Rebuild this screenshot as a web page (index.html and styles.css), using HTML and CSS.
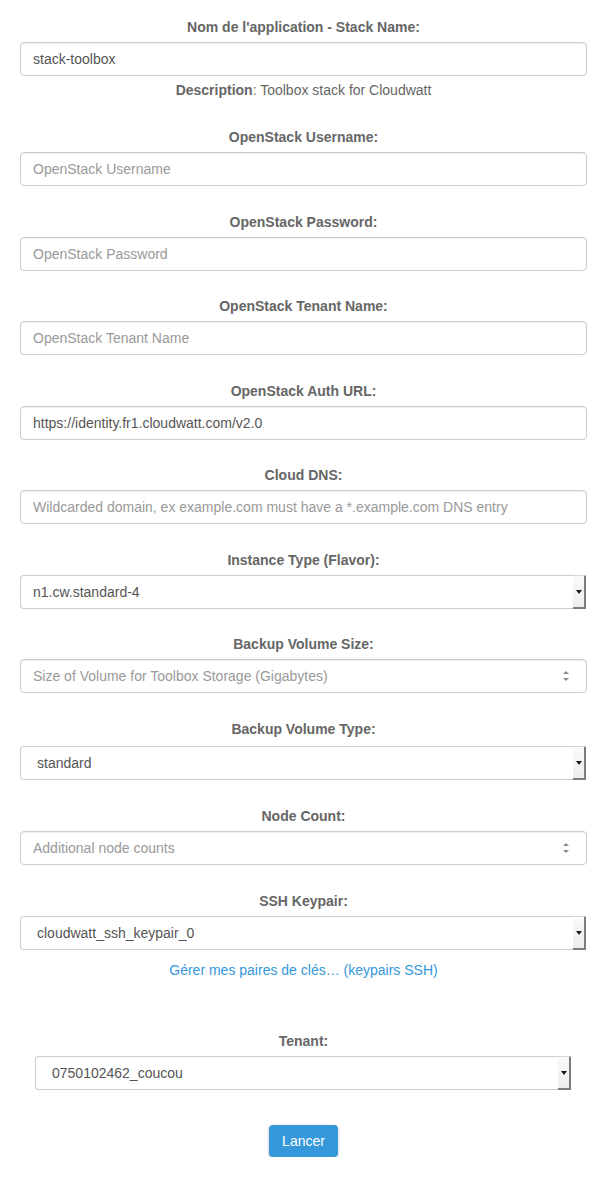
FILE: index.html
```html
<!DOCTYPE html>
<html lang="fr">
<head>
<meta charset="utf-8">
<title>Stack</title>
<link rel="stylesheet" href="styles.css">
</head>
<body>
<form class="form">
  <div class="group group-first">
    <label class="label">Nom de l'application - Stack Name:</label>
    <input class="control" type="text" value="stack-toolbox">
    <p class="help"><strong>Description</strong>: Toolbox stack for Cloudwatt</p>
  </div>

  <div class="group">
    <label class="label">OpenStack Username:</label>
    <input class="control" type="text" placeholder="OpenStack Username">
  </div>

  <div class="group">
    <label class="label">OpenStack Password:</label>
    <input class="control" type="password" placeholder="OpenStack Password">
  </div>

  <div class="group">
    <label class="label">OpenStack Tenant Name:</label>
    <input class="control" type="text" placeholder="OpenStack Tenant Name">
  </div>

  <div class="group">
    <label class="label">OpenStack Auth URL:</label>
    <input class="control" type="text" value="https://identity.fr1.cloudwatt.com/v2.0">
  </div>

  <div class="group">
    <label class="label">Cloud DNS:</label>
    <input class="control" type="text" placeholder="Wildcarded domain, ex example.com must have a *.example.com DNS entry">
  </div>

  <div class="group">
    <label class="label">Instance Type (Flavor):</label>
    <div class="select">
      <span class="select-value select-value-tight">n1.cw.standard-4</span>
      <span class="select-btn"><span class="caret"></span></span>
    </div>
  </div>

  <div class="group">
    <label class="label">Backup Volume Size:</label>
    <div class="field">
      <input class="field-input" type="text" placeholder="Size of Volume for Toolbox Storage (Gigabytes)">
      <span class="spin"><span class="spin-up"></span><span class="spin-down"></span></span>
    </div>
  </div>

  <div class="group group-voltype">
    <label class="label">Backup Volume Type:</label>
    <div class="select">
      <span class="select-value">standard</span>
      <span class="select-btn"><span class="caret"></span></span>
    </div>
  </div>

  <div class="group">
    <label class="label">Node Count:</label>
    <div class="field">
      <input class="field-input" type="text" placeholder="Additional node counts">
      <span class="spin"><span class="spin-up"></span><span class="spin-down"></span></span>
    </div>
  </div>

  <div class="group group-keypair">
    <label class="label">SSH Keypair:</label>
    <div class="select">
      <span class="select-value">cloudwatt_ssh_keypair_0</span>
      <span class="select-btn"><span class="caret"></span></span>
    </div>
    <a class="link" href="#">Gérer mes paires de clés… (keypairs SSH)</a>
  </div>

  <div class="group group-tenant">
    <label class="label">Tenant:</label>
    <div class="select">
      <span class="select-value">0750102462_coucou</span>
      <span class="select-btn"><span class="caret"></span></span>
    </div>
  </div>

  <div class="actions">
    <button class="btn" type="button">Lancer</button>
  </div>
</form>
</body>
</html>
```

FILE: styles.css
```css
* {
  box-sizing: border-box;
}

html, body {
  background: #fff;
}

body {
  margin: 0;
  font-family: "Liberation Sans", Arial, sans-serif;
  font-size: 14px;
  line-height: 20px;
  color: #666;
}

.form {
  padding: 17px 18px 0 20px;
}

.group {
  margin-bottom: 25.5px;
  text-align: center;
}

.group-first {
  margin-bottom: 27px;
}

.label {
  display: block;
  font-weight: bold;
  margin-bottom: 5px;
  color: #666;
}

.group-voltype {
  margin-bottom: 26.5px;
}

.group-voltype .label {
  margin-bottom: 7px;
}

.control {
  display: block;
  width: 100%;
  height: 34px;
  padding: 6px 12px;
  border: 1px solid #ccc;
  border-radius: 4px;
  font-family: inherit;
  font-size: 14px;
  line-height: 20px;
  color: #555;
  background: #fff;
  box-shadow: inset 0 1px 1px rgba(0, 0, 0, 0.075);
  outline: none;
}

.control::placeholder,
.field-input::placeholder {
  color: #999;
  opacity: 1;
}

.help {
  margin: 4px 0 0;
  color: #666;
}

.help strong {
  font-weight: bold;
}

.select {
  display: flex;
  width: calc(100% - 1px);
  height: 34px;
  border: 1px solid #ccc;
  border-right: none;
  border-radius: 4px 0 0 4px;
  background: #fff;
  text-align: left;
  color: #555;
}

.select-value {
  flex: 1;
  padding: 6px 16px;
  line-height: 20px;
  white-space: nowrap;
  overflow: hidden;
}

.select-value-tight {
  padding-left: 12px;
}

.select-btn {
  display: flex;
  align-items: center;
  justify-content: center;
  width: 13px;
  margin: -1px 0 -1px 0;
  background: linear-gradient(to bottom, #fafafa, #ededed);
  border-top: 1px solid #d8d8d8;
  border-right: 2px solid #7c7c7c;
  border-bottom: 2px solid #7c7c7c;
  border-top-right-radius: 2px;
}

.caret {
  width: 0;
  height: 0;
  border-left: 3px solid transparent;
  border-right: 3px solid transparent;
  border-top: 4px solid #1a1a1a;
  margin-top: 1px;
}

.field {
  display: flex;
  align-items: center;
  width: 100%;
  height: 34px;
  border: 1px solid #ccc;
  border-radius: 4px;
  background: #fff;
  box-shadow: inset 0 1px 1px rgba(0, 0, 0, 0.075);
}

.field-input {
  flex: 1;
  min-width: 0;
  height: 32px;
  padding: 6px 12px;
  border: none;
  background: transparent;
  font-family: inherit;
  font-size: 14px;
  line-height: 20px;
  color: #555;
  outline: none;
}

.spin {
  display: flex;
  flex-direction: column;
  align-items: center;
  gap: 4px;
  margin-right: 17px;
}

.spin-up {
  width: 0;
  height: 0;
  border-left: 3px solid transparent;
  border-right: 3px solid transparent;
  border-bottom: 3px solid #8a8a8a;
}

.spin-down {
  width: 0;
  height: 0;
  border-left: 3px solid transparent;
  border-right: 3px solid transparent;
  border-top: 3px solid #8a8a8a;
}

.group-keypair {
  margin-bottom: 51.5px;
}

.link {
  display: block;
  margin-top: 10px;
  color: #3498db;
  text-decoration: none;
}

.group-tenant {
  padding: 0 15px;
  margin-bottom: 35px;
}

.actions {
  text-align: center;
}

.btn {
  display: inline-block;
  padding: 6px 13px;
  border: none;
  border-radius: 4px;
  background: #3498db;
  color: #fff;
  font-family: inherit;
  font-size: 14px;
  line-height: 20px;
  box-shadow: 0 1px 3px rgba(0, 0, 0, 0.25);
  cursor: pointer;
}
```
